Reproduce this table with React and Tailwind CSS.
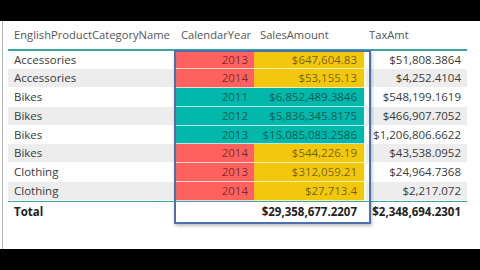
import React from 'react';

const RED = 'bg-[#fd625e]';
const YELLOW = 'bg-[#f2c80f]';
const TEAL = 'bg-[#01b8aa]';

const rows = [
  { name: 'Accessories', year: '2013', sales: '$647,604.83', tax: '$51,808.3864', yc: RED, sc: YELLOW },
  { name: 'Accessories', year: '2014', sales: '$53,155.13', tax: '$4,252.4104', yc: RED, sc: YELLOW },
  { name: 'Bikes', year: '2011', sales: '$6,852,489.3846', tax: '$548,199.1619', yc: TEAL, sc: TEAL },
  { name: 'Bikes', year: '2012', sales: '$5,836,345.8175', tax: '$466,907.7052', yc: TEAL, sc: TEAL },
  { name: 'Bikes', year: '2013', sales: '$15,085,083.2586', tax: '$1,206,806.6622', yc: TEAL, sc: TEAL },
  { name: 'Bikes', year: '2014', sales: '$544,226.19', tax: '$43,538.0952', yc: RED, sc: YELLOW },
  { name: 'Clothing', year: '2013', sales: '$312,059.21', tax: '$24,964.7368', yc: RED, sc: YELLOW },
  { name: 'Clothing', year: '2014', sales: '$27,713.4', tax: '$2,217.072', yc: RED, sc: YELLOW },
];

const App = () => {
  return (
    <div className="w-[480px] h-[270px] bg-black flex flex-col overflow-hidden" style={{ fontFamily: '"Open Sans", "Noto Sans", sans-serif' }}>
      <div className="h-[21px] shrink-0" />
      <div className="h-[228px] bg-white relative flex shrink-0">
        <div className="w-[2px] shrink-0" />
        <div className="w-[1px] bg-[#b4b4b4] shrink-0" />
        <div className="ml-[5px] relative">
          {/* header */}
          <div className="grid grid-cols-[166px_80px_112px_101px] h-[28px] items-center text-[11.2px] text-[#555]">
            <div className="pl-[6px]">EnglishProductCategoryName</div>
            <div className="pl-[7px]">CalendarYear</div>
            <div className="pl-[6px]">SalesAmount</div>
            <div className="pl-[3px]">TaxAmt</div>
          </div>
          <div className="h-[1.5px] bg-[#3aa6a2] w-[459px]" />
          {rows.map((r, i) => {
            const stripe = i % 2 === 1 ? 'bg-[#ededed]' : 'bg-white';
            return (
              <div key={i} className="grid grid-cols-[166px_80px_112px_101px] h-[18.75px] items-stretch text-[11.5px] text-[#3a3a3a] leading-none">
                <div className={`${stripe} pl-[6px] flex items-center border-b border-white`}>{r.name}</div>
                <div className={`${r.yc} pr-[6px] flex items-center justify-end border-b border-white/70 text-black/55`}>{r.year}</div>
                <div className={`${r.sc} pr-[7px] mr-[2px] flex items-center justify-end border-b border-white/70 text-black/55`}>{r.sales}</div>
                <div className={`${stripe} pr-[6px] flex items-center justify-end border-b border-white`}>{r.tax}</div>
              </div>
            );
          })}
          <div className="h-[1.5px] bg-[#3aa6a2] w-[459px]" />
          <div className="grid grid-cols-[166px_80px_112px_101px] h-[19px] items-center text-[11.5px] text-[#222] font-bold">
            <div className="pl-[6px]">Total</div>
            <div />
            <div className="pr-[9px] text-right">$29,358,677.2207</div>
            <div className="pr-[6px] text-right">$2,348,694.2301</div>
          </div>
          {/* selection box */}
          <div className="absolute left-[166px] top-[29px] w-[197px] h-[174px] border-2 border-[#4e6fae] shadow-[1px_2px_3px_rgba(0,0,0,0.25)] pointer-events-none" />
        </div>
      </div>
      <div className="flex-1" />
    </div>
  );
};

export default App;
